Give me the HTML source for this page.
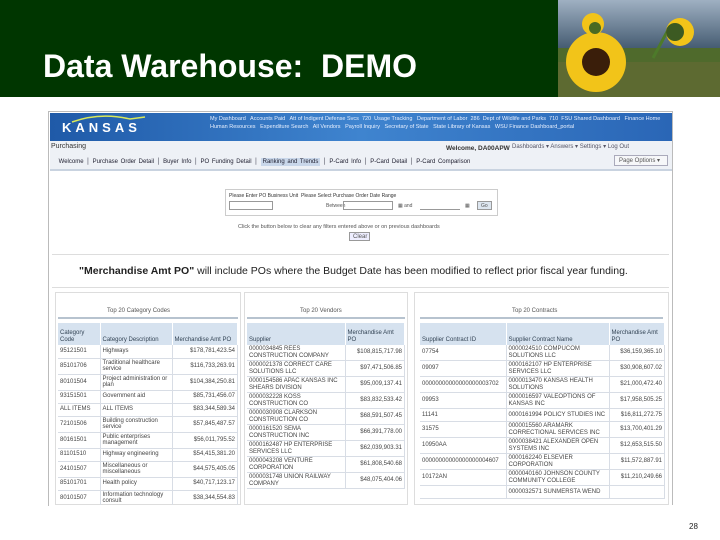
<!DOCTYPE html><html><head><style>
*{margin:0;padding:0;box-sizing:border-box}
body{width:720px;height:540px;background:#fff;position:relative;overflow:hidden;font-family:"Liberation Sans",sans-serif}
.a{position:absolute}
.t{font-size:6px;color:#555;line-height:7px}
table{border-collapse:collapse;position:absolute;font-size:6px;color:#444}
td{border-bottom:1px solid #d8dde5;border-right:1px solid #d8dde5;padding:1px 2px;vertical-align:middle;line-height:6.5px;height:13px}
th{background:#d6e2ef;font-weight:normal;text-align:left;color:#345;padding:1px 2px;vertical-align:bottom;border-right:1px solid #fff;line-height:7px;height:22px}
td.r{text-align:right}
</style></head><body>
<div class="a" style="left:0;top:0;width:720px;height:97px;background:#003600"></div>
<div class="a" style="left:43px;top:48px;color:#fff;font-size:32px;font-weight:bold;white-space:pre">Data Warehouse:  DEMO</div>
<svg class="a" style="left:558px;top:0" width="162" height="97">
<defs><linearGradient id="s" x1="0" y1="0" x2="0" y2="1"><stop offset="0" stop-color="#9fb0c2"/><stop offset="1" stop-color="#42596f"/></linearGradient></defs>
<rect width="162" height="50" fill="url(#s)"/><rect y="48" width="162" height="49" fill="#4f6a2c"/><rect y="62" width="162" height="35" fill="#6b6a35" opacity=".5"/>
<path d="M110 30 L95 58" stroke="#4d7a2a" stroke-width="3"/>
<g fill="#f2c419"><circle cx="38" cy="62" r="30"/><circle cx="122" cy="32" r="14"/><circle cx="35" cy="24" r="11"/></g>
<circle cx="38" cy="62" r="14" fill="#3a1e0a"/><circle cx="117" cy="32" r="9" fill="#3c5a22"/><circle cx="37" cy="28" r="6" fill="#4a6a22"/>
</svg>
<div class="a" style="left:48px;top:111px;width:625px;height:395px;border:1px solid #bbb;background:#fff"></div>
<div class="a" style="left:50px;top:113px;width:622px;height:28px;background:linear-gradient(90deg,#1f5aa8,#3f84cf 50%,#2a66b6)"></div>
<svg class="a" style="left:70px;top:114px" width="80" height="10"><path d="M2 8 Q30 -2 60 5 L75 3" stroke="#d8e85a" stroke-width="1.5" fill="none"/></svg>
<div class="a" style="left:62px;top:120px;color:#fff;font-size:13px;font-weight:bold;letter-spacing:4px">KANSAS</div>
<div class="a" style="left:210px;top:115px;width:458px;color:#e8f0ff;font-size:5.5px;line-height:8px">My Dashboard &nbsp; Accounts Paid &nbsp; Att of Indigent Defense Svcs &nbsp;720 &nbsp;Usage Tracking &nbsp; Department of Labor &nbsp;286 &nbsp;Dept of Wildlife and Parks &nbsp;710 &nbsp;FSU Shared Dashboard &nbsp; Finance Home &nbsp; Human Resources &nbsp; Expenditure Search &nbsp; All Vendors &nbsp; Payroll Inquiry &nbsp; Secretary of State &nbsp; State Library of Kansas &nbsp; WSU Finance Dashboard_portal</div>
<div class="a" style="left:50px;top:141px;width:622px;height:30px;background:#eef1f6;border-bottom:2px solid #c9d3e0"></div>
<div class="a t" style="left:51px;top:143px;font-size:7px;color:#333">Purchasing</div>
<div class="a t" style="left:446px;top:145px;font-size:6.5px;color:#333;font-weight:bold">Welcome, DA00APW</div>
<div class="a t" style="left:512px;top:144px;color:#556">Dashboards ▾ Answers ▾ Settings ▾ Log Out</div>
<div class="a t" style="left:56px;top:159px;font-size:6px;color:#223;white-space:nowrap;word-spacing:1px">&nbsp;Welcome │ Purchase Order Detail │ Buyer Info │ PO Funding Detail │ <span style="background:#c9d7ea;padding:1px 2px">Ranking and Trends</span> │ P-Card Info │ P-Card Detail │ P-Card Comparison</div>
<div class="a t" style="left:614px;top:155px;width:54px;height:11px;border:1px solid #aab;background:#f6f7f9;padding:2px 4px">Page Options ▾</div>
<div class="a" style="left:225px;top:189px;width:273px;height:27px;border:1px solid #ccc"></div>
<div class="a t" style="left:229px;top:193px;font-size:5px;color:#333">Please Enter PO Business Unit &nbsp;Please Select Purchase Order Date Range</div>
<div class="a" style="left:229px;top:201px;width:44px;height:9px;border:1px solid #999"></div>
<div class="a t" style="left:326px;top:203px;font-size:5px">Between</div>
<div class="a" style="left:343px;top:201px;width:50px;height:9px;border:1px solid #999"></div>
<div class="a t" style="left:398px;top:203px;font-size:5px">▦ and</div>
<div class="a" style="left:420px;top:201px;width:40px;height:9px;border-bottom:1px solid #999"></div>
<div class="a t" style="left:465px;top:203px;font-size:5px">▦</div>
<div class="a t" style="left:477px;top:201px;width:15px;height:9px;border:1px solid #999;background:#dde6f0;font-size:5px;padding:1px 3px">Go</div>
<div class="a t" style="left:238px;top:224px;font-size:5.5px">Click the button below to clear any filters entered above or on previous dashboards</div>
<div class="a t" style="left:349px;top:232px;width:21px;height:9px;border:1px solid #999;background:#eef;padding:1px 3px">Clear</div>
<div class="a" style="left:52px;top:254px;width:617px;height:1px;background:#ddd"></div>
<div class="a" style="left:79px;top:265px;font-size:10.5px;color:#222;white-space:nowrap"><b>"Merchandise Amt PO"</b> will include POs where the Budget Date has been modified to reflect prior fiscal year funding.</div>
<div class="a" style="left:52px;top:287px;width:617px;height:1px;background:#ddd"></div>
<div class="a" style="left:55px;top:292px;width:186px;height:213px;border:1px solid #ddd"></div>
<div class="a" style="left:244px;top:292px;width:164px;height:213px;border:1px solid #ddd"></div>
<div class="a" style="left:414px;top:292px;width:255px;height:213px;border:1px solid #ddd"></div>
<div class="a t" style="left:107px;top:308px">Top 20 Category Codes</div>
<div class="a t" style="left:300px;top:308px">Top 20 Vendors</div>
<div class="a t" style="left:512px;top:308px">Top 20 Contracts</div>
<div class="a" style="left:58px;top:317px;width:180px;height:2px;background:#b7c3cf"></div>
<div class="a" style="left:247px;top:317px;width:158px;height:2px;background:#b7c3cf"></div>
<div class="a" style="left:420px;top:317px;width:243px;height:2px;background:#b7c3cf"></div>
<table style="left:58px;top:323px;width:180px"><tr><th style="width:42px">Category Code</th><th style="width:72px">Category Description</th><th>Merchandise Amt PO</th></tr>
<tr><td>95121501</td><td>Highways</td><td class="r">$178,781,423.54</td></tr>
<tr><td>85101706</td><td>Traditional healthcare service</td><td class="r">$116,733,263.91</td></tr>
<tr><td>80101504</td><td>Project administration or plan</td><td class="r">$104,384,250.81</td></tr>
<tr><td>93151501</td><td>Government aid</td><td class="r">$85,731,456.07</td></tr>
<tr><td>ALL ITEMS</td><td>ALL ITEMS</td><td class="r">$83,344,589.34</td></tr>
<tr><td>72101506</td><td>Building construction service</td><td class="r">$57,845,487.57</td></tr>
<tr><td>80161501</td><td>Public enterprises management</td><td class="r">$56,011,795.52</td></tr>
<tr><td>81101510</td><td>Highway engineering</td><td class="r">$54,415,381.20</td></tr>
<tr><td>24101507</td><td>Miscellaneous or miscellaneous</td><td class="r">$44,575,405.05</td></tr>
<tr><td>85101701</td><td>Health policy</td><td class="r">$40,717,123.17</td></tr>
<tr><td>80101507</td><td>Information technology consult</td><td class="r">$38,344,554.83</td></tr></table>
<table style="left:247px;top:323px;width:158px"><tr><th style="width:98px">Supplier</th><th>Merchandise Amt PO</th></tr>
<tr><td>0000034845 REES CONSTRUCTION COMPANY</td><td class="r">$108,815,717.98</td></tr>
<tr><td>0000021378 CORRECT CARE SOLUTIONS LLC</td><td class="r">$97,471,506.85</td></tr>
<tr><td>0000154586 APAC KANSAS INC SHEARS DIVISION</td><td class="r">$95,009,137.41</td></tr>
<tr><td>0000032228 KOSS CONSTRUCTION CO</td><td class="r">$83,832,533.42</td></tr>
<tr><td>0000030908 CLARKSON CONSTRUCTION CO</td><td class="r">$68,591,507.45</td></tr>
<tr><td>0000161520 SEMA CONSTRUCTION INC</td><td class="r">$66,391,778.00</td></tr>
<tr><td>0000162487 HP ENTERPRISE SERVICES LLC</td><td class="r">$62,039,903.31</td></tr>
<tr><td>0000043208 VENTURE CORPORATION</td><td class="r">$61,808,540.68</td></tr>
<tr><td>0000031748 UNION RAILWAY COMPANY</td><td class="r">$48,075,404.06</td></tr></table>
<table style="left:420px;top:323px;width:245px"><tr><th style="width:86px">Supplier Contract ID</th><th style="width:103px">Supplier Contract Name</th><th>Merchandise Amt PO</th></tr>
<tr><td>07754</td><td>0000024510 COMPUCOM SOLUTIONS LLC</td><td class="r">$36,159,365.10</td></tr>
<tr><td>09097</td><td>0000162107 HP ENTERPRISE SERVICES LLC</td><td class="r">$30,908,607.02</td></tr>
<tr><td>00000000000000000003702</td><td>0000013470 KANSAS HEALTH SOLUTIONS</td><td class="r">$21,000,472.40</td></tr>
<tr><td>09953</td><td>0000016597 VALEOPTIONS OF KANSAS INC</td><td class="r">$17,958,505.25</td></tr>
<tr><td>11141</td><td>0000161994 POLICY STUDIES INC</td><td class="r">$16,811,272.75</td></tr>
<tr><td>31575</td><td>0000015560 ARAMARK CORRECTIONAL SERVICES INC</td><td class="r">$13,700,401.29</td></tr>
<tr><td>10950AA</td><td>0000038421 ALEXANDER OPEN SYSTEMS INC</td><td class="r">$12,653,515.50</td></tr>
<tr><td>00000000000000000004607</td><td>0000162240 ELSEVIER CORPORATION</td><td class="r">$11,572,887.91</td></tr>
<tr><td>10172AN</td><td>0000040160 JOHNSON COUNTY COMMUNITY COLLEGE</td><td class="r">$11,210,249.66</td></tr>
<tr><td></td><td>0000032571 SUNMERSTA WEND</td><td class="r"></td></tr></table>
<div class="a" style="left:49px;top:505px;width:624px;height:35px;background:#fff"></div>
<div class="a" style="left:689px;top:522px;font-size:8px;color:#222">28</div>
</body></html>
